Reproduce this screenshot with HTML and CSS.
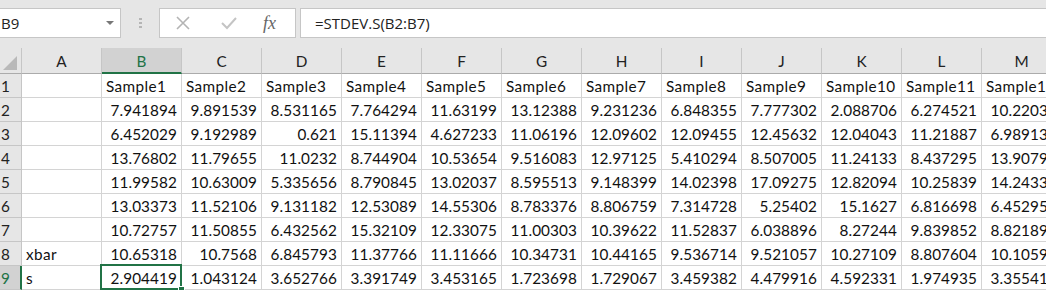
FILE: index.html
```html
<!DOCTYPE html>
<html lang="en">
<head>
  <meta charset="UTF-8">
  <title>Sheet - STDEV</title>
  <link rel="stylesheet" href="styles.css">
</head>
<body>
  <div class="toolbar">
    <div class="namebox">
      <span>B9</span>
      <span class="caret"></span>
    </div>
    <div class="grip"><i></i><i></i><i></i></div>
    <div class="fnbox">
      <svg class="ico" width="14" height="14" viewBox="0 0 14 14"><path d="M1 1L13 13M13 1L1 13" stroke="#b4b4b4" stroke-width="1.6" fill="none"/></svg>
      <svg class="ico" width="16" height="14" viewBox="0 0 16 14"><path d="M1 7L6 12L15 2" stroke="#c4c4c4" stroke-width="2" fill="none"/></svg>
      <span class="fx">fx</span>
    </div>
    <div class="formula">=STDEV.S(B2:B7)</div>
  </div>

  <div class="sheet" id="sheet"></div>

  <script>
    const cols = ['A','B','C','D','E','F','G','H','I','J','K','L','M'];
    const rows = [
      ['', 'Sample1','Sample2','Sample3','Sample4','Sample5','Sample6','Sample7','Sample8','Sample9','Sample10','Sample11','Sample12'],
      ['', 7.941894, 9.891539, 8.531165, 7.764294, 11.63199, 13.12388, 9.231236, 6.848355, 7.777302, 2.088706, 6.274521, 10.22034],
      ['', 6.452029, 9.192989, 0.621, 15.11394, 4.627233, 11.06196, 12.09602, 12.09455, 12.45632, 12.04043, 11.21887, 6.989134],
      ['', 13.76802, 11.79655, 11.0232, 8.744904, 10.53654, 9.516083, 12.97125, 5.410294, 8.507005, 11.24133, 8.437295, 13.90791],
      ['', 11.99582, 10.63009, 5.335656, 8.790845, 13.02037, 8.595513, 9.148399, 14.02398, 17.09275, 12.82094, 10.25839, 14.24331],
      ['', 13.03373, 11.52106, 9.131182, 12.53089, 14.55306, 8.783376, 8.806759, 7.314728, 5.25402, 15.1627, 6.816698, 6.452951],
      ['', 10.72757, 11.50855, 6.432562, 15.32109, 12.33075, 11.00303, 10.39622, 11.52837, 6.038896, 8.27244, 9.839852, 8.821891],
      ['xbar', 10.65318, 10.7568, 6.845793, 11.37766, 11.11666, 10.34731, 10.44165, 9.536714, 9.521057, 10.27109, 8.807604, 10.10591],
      ['s', 2.904419, 1.043124, 3.652766, 3.391749, 3.453165, 1.723698, 1.729067, 3.459382, 4.479916, 4.592331, 1.974935, 3.355412]
    ];

    const sheet = document.getElementById('sheet');
    let html = '<div class="corner"></div>';
    cols.forEach(c => {
      html += `<div class="colhead${c === 'B' ? ' active' : ''}">${c}</div>`;
    });
    rows.forEach((row, r) => {
      const n = r + 1;
      html += `<div class="rowhead${n === 9 ? ' active' : ''}">${n}</div>`;
      row.forEach((v, c) => {
        const num = typeof v === 'number';
        let cls = 'cell' + (num ? ' num' : '');
        if (n === 9 && c === 1) cls += ' selected';
        html += `<div class="${cls}">${v}</div>`;
      });
    });
    sheet.innerHTML = html;
  </script>
</body>
</html>
```

FILE: styles.css
```css
body {
  margin: 0;
  background: #e6e6e6;
  font-family: 'Lato', sans-serif;
  color: #111;
  overflow: hidden;
  width: 1046px;
  height: 290px;
}
.toolbar {
  display: flex;
  align-items: center;
  height: 48px;
  margin-left: -2px;
}
.namebox {
  height: 28px;
  background: #fff;
  border: 1px solid #c6c6c6;
  display: flex;
  align-items: center;
  justify-content: space-between;
  padding: 0 6px 0 2px;
  width: 113px;
  font-family: 'Open Sans', sans-serif;
  font-size: 15px;
  color: #222;
  margin-top: -2px;
}
.caret {
  width: 0;
  height: 0;
  border-left: 4px solid transparent;
  border-right: 4px solid transparent;
  border-top: 4px solid #777;
}
.grip {
  width: 38px;
  display: flex;
  flex-direction: column;
  align-items: center;
  gap: 2px;
  margin-top: -2px;
}
.grip i {
  width: 3px;
  height: 2px;
  background: #b5b5b5;
}
.fnbox {
  width: 135px;
  height: 28px;
  background: #fff;
  border: 1px solid #c6c6c6;
  display: flex;
  align-items: center;
  margin-top: -2px;
}
.fnbox .ico:nth-child(1) { margin-left: 16px; }
.fnbox .ico:nth-child(2) { margin-left: 31px; }
.fx {
  margin-left: 26px;
  font-family: 'Liberation Serif', serif;
  font-style: italic;
  font-size: 18px;
  color: #666;
}
.formula {
  flex: 1;
  height: 28px;
  margin-left: 4px;
  margin-right: -10px;
  background: #fff;
  border: 1px solid #c6c6c6;
  display: flex;
  align-items: center;
  padding-left: 14px;
  font-family: 'Open Sans', sans-serif;
  font-size: 15px;
  color: #222;
  margin-top: -2px;
}
.sheet {
  display: grid;
  grid-template-columns: 22px repeat(13, 80px);
  grid-template-rows: 26px repeat(9, 24px);
  background: #fff;
  font-size: 15.3px;
}
.sheet > div {
  box-sizing: border-box;
  white-space: nowrap;
  overflow: hidden;
}
.corner {
  background: #e6e6e6;
  border-right: 1px solid #c6c6c6;
  border-bottom: 1px solid #ababab;
  position: relative;
}
.corner::after {
  content: '';
  position: absolute;
  right: 4px;
  bottom: 3px;
  width: 14px;
  height: 14px;
  background: #b9b9b9;
  clip-path: polygon(100% 0, 100% 100%, 0 100%);
}
.colhead {
  background: #e6e6e6;
  border-right: 1px solid #c6c6c6;
  border-bottom: 1px solid #ababab;
  text-align: center;
  line-height: 25px;
  padding-top: 1px;
  color: #222;
}
.colhead.active {
  background: #d2d2d2;
  color: #217346;
  border-bottom: 2px solid #217346;
}
.rowhead {
  background: #e6e6e6;
  border-right: 1px solid #c6c6c6;
  border-bottom: 1px solid #c6c6c6;
  padding-left: 1px;
  line-height: 25px;
  color: #222;
}
.rowhead.active {
  background: #d2d2d2;
  color: #217346;
  border-right: 2px solid #217346;
}
.cell {
  border-right: 1px solid #d4d4d4;
  border-bottom: 1px solid #d4d4d4;
  padding: 0 4px;
  line-height: 25px;
  letter-spacing: 0.4px;
}
.cell.num {
  text-align: right;
  letter-spacing: 0.1px;
}
.cell.selected {
  overflow: visible !important;
  position: relative;
}
.cell.selected::after {
  content: '';
  position: absolute;
  left: -2px;
  top: -2px;
  right: -1px;
  bottom: -1px;
  border: 2px solid #217346;
}
.cell.selected::before {
  content: '';
  position: absolute;
  right: -4px;
  bottom: -4px;
  width: 5px;
  height: 5px;
  background: #217346;
  border: 1px solid #fff;
  z-index: 1;
}
```
